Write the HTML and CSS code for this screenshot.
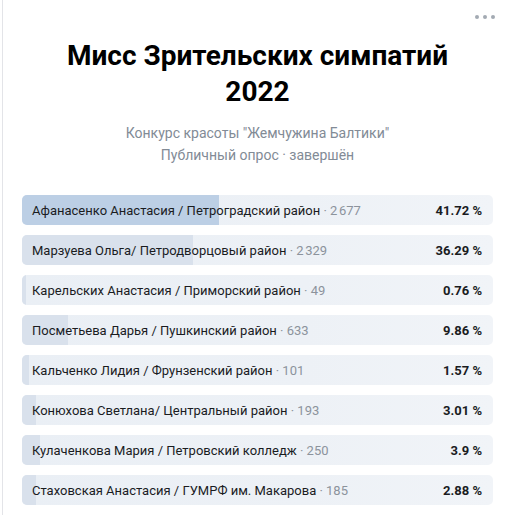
FILE: index.html
```html
<!DOCTYPE html>
<html lang="ru">
<head>
<meta charset="utf-8">
<title>Опрос</title>
<link rel="stylesheet" href="styles.css">
</head>
<body>
<div class="card">
  <div class="card-top">
    <button class="more" aria-label="Ещё"><span></span><span></span><span></span></button>
  </div>
  <div class="poll">
    <h1 class="poll-title">Мисс Зрительских симпатий 2022</h1>
    <div class="poll-sub">Конкурс красоты "Жемчужина Балтики"</div>
    <div class="poll-sub">Публичный опрос · завершён</div>
    <ul class="answers">
      <li class="answer answer-lead"><span class="fill" style="width:41.72%"></span><span class="label">Афанасенко Анастасия / Петроградский район <span class="count">· 2&#8239;677</span></span><span class="pct">41.72 %</span></li>
      <li class="answer"><span class="fill" style="width:36.29%"></span><span class="label">Марзуева Ольга/ Петродворцовый район <span class="count">· 2&#8239;329</span></span><span class="pct">36.29 %</span></li>
      <li class="answer"><span class="fill" style="width:0.76%"></span><span class="label">Карельских Анастасия / Приморский район <span class="count">· 49</span></span><span class="pct">0.76 %</span></li>
      <li class="answer"><span class="fill" style="width:9.86%"></span><span class="label">Посметьева Дарья / Пушкинский район <span class="count">· 633</span></span><span class="pct">9.86 %</span></li>
      <li class="answer"><span class="fill" style="width:1.57%"></span><span class="label">Кальченко Лидия / Фрунзенский район <span class="count">· 101</span></span><span class="pct">1.57 %</span></li>
      <li class="answer"><span class="fill" style="width:3.01%"></span><span class="label">Конюхова Светлана/ Центральный район <span class="count">· 193</span></span><span class="pct">3.01 %</span></li>
      <li class="answer"><span class="fill" style="width:3.9%"></span><span class="label">Кулаченкова Мария / Петровский колледж <span class="count">· 250</span></span><span class="pct">3.9 %</span></li>
      <li class="answer"><span class="fill" style="width:2.88%"></span><span class="label">Стаховская Анастасия / ГУМРФ им. Макарова <span class="count">· 185</span></span><span class="pct">2.88 %</span></li>
    </ul>
  </div>
</div>
</body>
</html>
```

FILE: styles.css
```css
* { box-sizing: border-box; }

body {
  margin: 0;
  background: #fff;
  font-family: Roboto, "Noto Sans", sans-serif;
  color: #000;
}

.card {
  margin-left: 2px;
  border-left: 1px solid #e3e4e8;
  min-height: 515px;
  padding: 0 16px 0 19px;
}

.card-top {
  display: flex;
  justify-content: flex-end;
  height: 34px;
}

.more {
  display: flex;
  gap: 4px;
  align-items: center;
  padding: 0;
  margin: 0 -2px 0 0;
  border: 0;
  background: none;
  height: 34px;
}

.more span {
  width: 4px;
  height: 4px;
  border-radius: 50%;
  background: #a3aab3;
}

.poll {
  display: flex;
  flex-direction: column;
  align-items: stretch;
}

.poll-title {
  margin: 4px 30px 12px;
  font-size: 28px;
  line-height: 36px;
  font-weight: 700;
  text-align: center;
}

.poll-sub {
  font-size: 14px;
  line-height: 22px;
  color: #828b96;
  text-align: center;
}

.answers {
  list-style: none;
  margin: 29px 0 0;
  padding: 0;
  display: flex;
  flex-direction: column;
  gap: 10px;
}

.answer {
  position: relative;
  display: flex;
  align-items: center;
  justify-content: space-between;
  height: 30px;
  padding: 0 11px 0 10px;
  border-radius: 5px;
  overflow: hidden;
  background: linear-gradient(90deg, #eaeff5 0%, #edf1f6 60%, #f1f4f8 100%);
  font-size: 13px;
}

.fill {
  position: absolute;
  left: 0;
  top: 0;
  bottom: 0;
  background: #d9e1ec;
}

.answer-lead .fill {
  background: #bccfe5;
}

.label {
  position: relative;
  color: #1a1c1f;
}

.count {
  color: #8c939c;
}

.pct {
  position: relative;
  font-weight: 700;
  color: #1a1c1f;
}
```
